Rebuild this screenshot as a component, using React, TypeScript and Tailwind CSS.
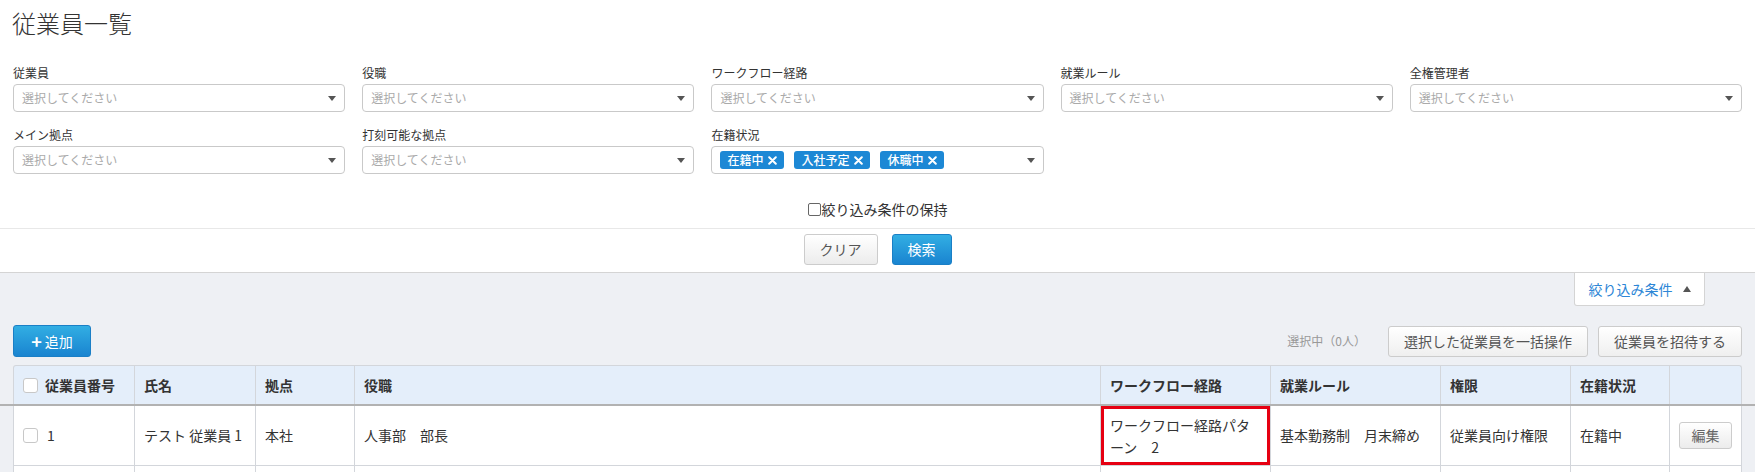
import React from "react";

const filters = [
  { label: "従業員" },
  { label: "役職" },
  { label: "ワークフロー経路" },
  { label: "就業ルール" },
  { label: "全権管理者" },
  { label: "メイン拠点" },
  { label: "打刻可能な拠点" },
  { label: "在籍状況", tags: ["在籍中", "入社予定", "休職中"] },
];

const cols = "grid grid-cols-[121px_121px_99px_746px_170px_170px_130px_99px_72px]";

const Arrow = () => (
  <span className="h-0 w-0 border-x-[4px] border-t-[5px] border-x-transparent border-t-[#555]" />
);

const Check = () => (
  <span className="inline-block h-[15px] w-[15px] shrink-0 rounded-[3px] border border-[#c8c8c8] bg-white" />
);

const XIcon = () => (
  <svg width="9" height="9" viewBox="0 0 9 9" className="shrink-0">
    <path d="M1.2 1.2 L7.8 7.8 M7.8 1.2 L1.2 7.8" stroke="white" strokeWidth="2" strokeLinecap="round" />
  </svg>
);

const SelectBox = ({ tags }: { tags?: string[] }) => (
  <div className="flex h-[28px] items-center rounded-[4px] border border-[#c9c9c9] bg-white pl-[8px] pr-[8px]">
    <div className="flex flex-1 items-center gap-[10px]">
      {tags ? (
        tags.map((t) => (
          <span
            key={t}
            className="flex h-[18px] items-center gap-[5px] rounded-[3px] bg-[#1d88d5] px-[7px] text-[12px] font-medium leading-none text-white"
          >
            {t}
            <XIcon />
          </span>
        ))
      ) : (
        <span className="text-[12px] text-[#aaa]">選択してください</span>
      )}
    </div>
    <Arrow />
  </div>
);

const headers = ["従業員番号", "氏名", "拠点", "役職", "ワークフロー経路", "就業ルール", "権限", "在籍状況", ""];

export default function App() {
  return (
    <div className="min-h-screen bg-[#eef0f4] font-['Noto_Sans_CJK_JP',sans-serif] text-[#333]">
      <div className="bg-white">
        <h1 className="px-[12px] pt-[10px] text-[24px] font-light leading-[26px] text-[#333]">従業員一覧</h1>

        <div className="mt-[29px] grid grid-cols-5 gap-x-[17px] gap-y-[15px] px-[13px]">
          {filters.map((f) => (
            <div key={f.label}>
              <div className="text-[12px] leading-[16px] text-[#333]">{f.label}</div>
              <div className="mt-[3px]">
                <SelectBox tags={f.tags} />
              </div>
            </div>
          ))}
        </div>

        <div className="mt-[25px] flex items-center justify-center text-[14px] leading-[20px] text-[#333]">
          <span className="mr-[1px] inline-block h-[13px] w-[13px] rounded-[2px] border border-[#666] bg-white" />
          絞り込み条件の保持
        </div>

        <div className="mt-[9px] h-px bg-[#e8e8e8]" />

        <div className="flex justify-center gap-[14px] pb-[7px] pt-[5px]">
          <button className="h-[31px] w-[74px] rounded-[3px] border border-[#ccc] bg-gradient-to-b from-white to-[#ececec] text-[14px] text-[#555]">
            クリア
          </button>
          <button className="h-[31px] w-[60px] rounded-[3px] border border-[#1a7fc6] bg-gradient-to-b from-[#32aee3] to-[#1a84d0] text-[14px] text-white">
            検索
          </button>
        </div>
      </div>

      <div className="border-t border-[#d4d4d4]">
        <div className="flex justify-end pr-[50px]">
          <div className="flex h-[33px] w-[131px] items-center justify-center gap-[10px] rounded-b-[3px] border-x border-b border-[#d4d4d4] bg-white text-[14px] text-[#2c86d6]">
            絞り込み条件
            <span className="h-0 w-0 border-x-[4px] border-b-[6px] border-x-transparent border-b-[#555]" />
          </div>
        </div>

        <div className="mt-[19px] flex items-center px-[13px]">
          <button className="flex h-[32px] w-[78px] items-center justify-center gap-[3px] rounded-[3px] border border-[#1a7fc6] bg-gradient-to-b from-[#32aee3] to-[#1a84d0] text-[14px] text-white">
            <span className="text-[18px] font-bold leading-none">+</span>
            追加
          </button>
          <div className="flex-1" />
          <span className="mr-[22px] text-[12px] text-[#999]">選択中（0人）</span>
          <button className="h-[31px] w-[200px] rounded-[3px] border border-[#ccc] bg-gradient-to-b from-white to-[#efefef] text-[14px] text-[#555]">
            選択した従業員を一括操作
          </button>
          <button className="ml-[10px] h-[31px] w-[144px] rounded-[3px] border border-[#ccc] bg-gradient-to-b from-white to-[#efefef] text-[14px] text-[#555]">
            従業員を招待する
          </button>
        </div>

        <div className={`${cols} mx-[13px] mt-[8px] h-[39px] rounded-t-[3px] border-x border-t border-[#d3d6db] bg-[#e4eefa] text-[14px] font-bold`}>
          {headers.map((h, i) => (
            <div
              key={i}
              className={`flex items-center gap-[7px] px-[9px] ${i < headers.length - 1 ? "border-r border-[#d3d6db]" : ""}`}
            >
              {i === 0 && <Check />}
              {h}
            </div>
          ))}
        </div>
        <div className="h-[2px] bg-[#b2b2b2]" />

        <div className={`${cols} mx-[13px] h-[60px] border-x border-b border-[#d3d6db] bg-white text-[14px]`}>
          <div className="flex items-center gap-[9px] border-r border-[#d3d6db] px-[9px]">
            <Check />1
          </div>
          <div className="flex items-center border-r border-[#d3d6db] px-[9px]">テスト 従業員 1</div>
          <div className="flex items-center border-r border-[#d3d6db] px-[9px]">本社</div>
          <div className="flex items-center border-r border-[#d3d6db] px-[9px]">人事部　部長</div>
          <div className="flex items-center border-r border-[#d3d6db] px-[9px] leading-[22px] shadow-[inset_0_0_0_3px_#e60012]">
            ワークフロー経路パターン　2
          </div>
          <div className="flex items-center border-r border-[#d3d6db] px-[9px]">基本勤務制　月末締め</div>
          <div className="flex items-center border-r border-[#d3d6db] px-[9px]">従業員向け権限</div>
          <div className="flex items-center border-r border-[#d3d6db] px-[9px]">在籍中</div>
          <div className="flex items-center px-[9px]">
            <button className="h-[27px] w-[53px] rounded-[3px] border border-[#ccc] bg-gradient-to-b from-white to-[#ececec] text-[14px] text-[#666]">
              編集
            </button>
          </div>
        </div>

        <div className={`${cols} mx-[13px] h-[60px] border-x border-[#d3d6db] bg-white`}>
          {headers.map((_, i) => (
            <div key={i} className={i < headers.length - 1 ? "border-r border-[#d3d6db]" : ""} />
          ))}
        </div>
      </div>
    </div>
  );
}
